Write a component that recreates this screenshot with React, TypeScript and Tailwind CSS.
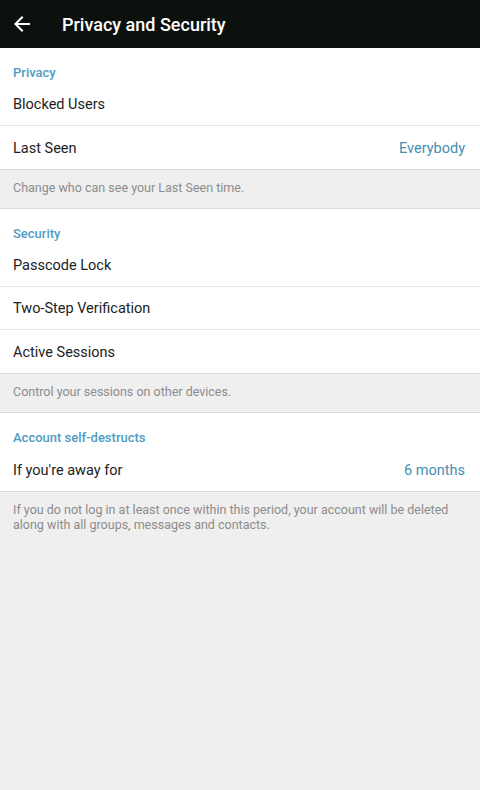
const font = { fontFamily: "Roboto, 'Noto Sans', sans-serif" };

function SectionTitle({ children }: { children: string }) {
  return (
    <div className="h-[35px] px-[13px] pt-[16px] text-[13px] font-medium leading-[18px] text-[#4f9cc3]">
      {children}
    </div>
  );
}

function Row({ label, value, divider = true }: { label: string; value?: string; divider?: boolean }) {
  return (
    <div
      className={
        "flex h-[43px] items-center justify-between pr-[15px] pl-[13px] pt-[2px] " +
        (divider ? "border-b border-[#e6e6e6]" : "")
      }
    >
      <span className="text-[14.5px] text-[#222222]">{label}</span>
      {value && <span className="text-[14.5px] text-[#458fb4]">{value}</span>}
    </div>
  );
}

function Info({ children, last = false }: { children: string; last?: boolean }) {
  return (
    <div
      className={
        "border-t border-[#d9d9d9] bg-[#efefef] px-[13px] pt-[10px] pb-[13px] text-[12.5px] leading-[15px] text-[#8c8c8c] " +
        (last ? "" : "border-b")
      }
    >
      {children}
    </div>
  );
}

export default function App() {
  return (
    <div style={font} className="flex min-h-[790px] w-[480px] flex-col bg-[#efefef]">
      <header className="flex h-[48px] items-center bg-[#0c110e] pl-[10px]">
        <svg width="24" height="24" viewBox="0 0 24 24" fill="#ffffff">
          <path d="M20 11H7.83l5.59-5.59L12 4l-8 8 8 8 1.41-1.41L7.83 13H20v-2z" />
        </svg>
        <h1 className="ml-[28px] text-[18px] font-medium text-white">Privacy and Security</h1>
      </header>

      <section className="bg-white">
        <SectionTitle>Privacy</SectionTitle>
        <Row label="Blocked Users" />
        <Row label="Last Seen" value="Everybody" divider={false} />
      </section>
      <Info>Change who can see your Last Seen time.</Info>

      <section className="bg-white">
        <SectionTitle>Security</SectionTitle>
        <Row label="Passcode Lock" />
        <Row label="Two-Step Verification" />
        <Row label="Active Sessions" divider={false} />
      </section>
      <Info>Control your sessions on other devices.</Info>

      <section className="bg-white">
        <SectionTitle>Account self-destructs</SectionTitle>
        <Row label="If you're away for" value="6 months" divider={false} />
      </section>
      <Info last>
        If you do not log in at least once within this period, your account will be deleted along with all groups, messages and contacts.
      </Info>
    </div>
  );
}
